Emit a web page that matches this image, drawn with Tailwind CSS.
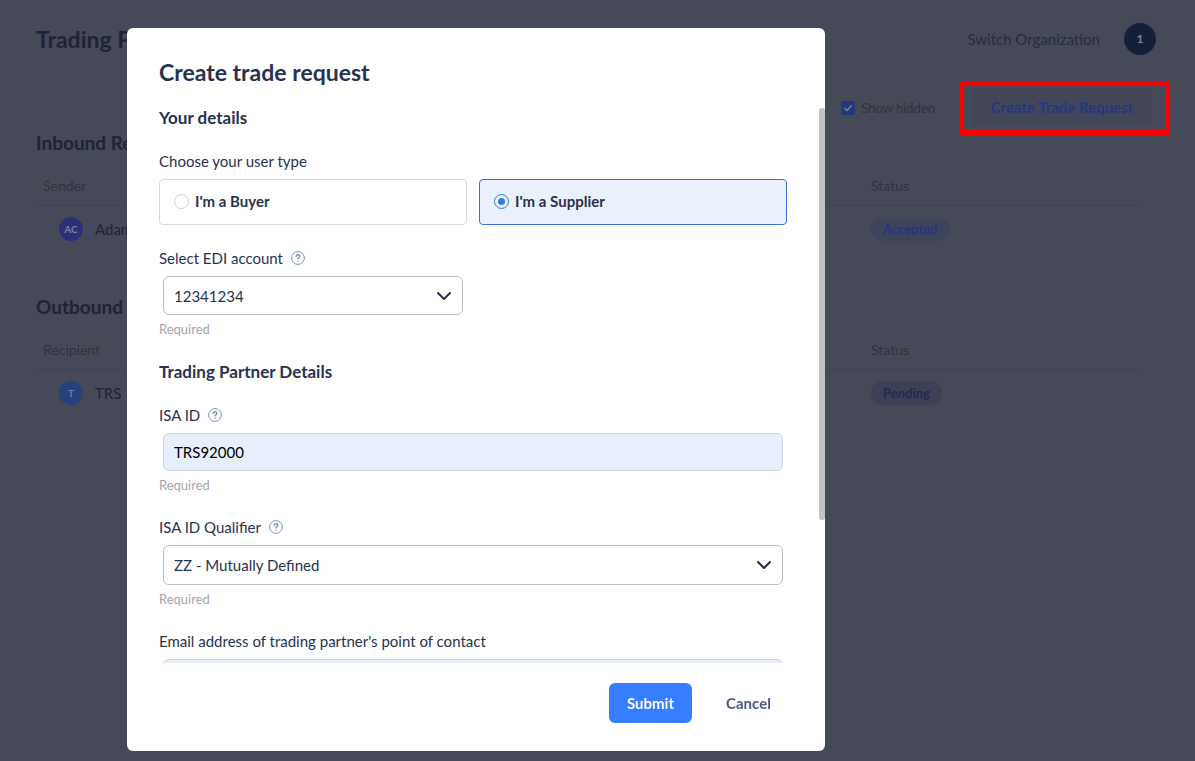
<!DOCTYPE html>
<html lang="en">
<head>
    <meta charset="UTF-8">
    <meta name="viewport" content="width=device-width, initial-scale=1.0">
    <title>Trading Partners</title>
    <script src="https://cdn.jsdelivr.net/npm/@tailwindcss/browser@4"></script>
</head>
<body class="h-screen overflow-hidden bg-[#464957] font-['Lato',sans-serif] text-[15px] leading-5 text-[#28324e]">

    <!-- Page behind the dialog -->
    <div class="pl-9 pr-[39px] pt-[19px] text-[#1f2338]">
        <header class="flex h-10 items-center justify-between">
            <h1 class="text-[23px] font-bold leading-8">Trading Partners</h1>
            <div class="flex items-center gap-6">
                <a href="#" class="text-[#262c45]">Switch Organization</a>
                <button class="size-8 rounded-full bg-[#161f3a] text-xs font-bold text-[#7f8391]">1</button>
            </div>
        </header>

        <div class="mt-[26px] -mr-[14px] flex h-[46px] items-center justify-end gap-6">
            <label class="flex items-center gap-[6px] text-[13px] text-[#2f3240]">
                <input type="checkbox" checked class="sr-only">
                <span class="flex size-[14px] items-center justify-center rounded-[3px] bg-[#22377c]">
                    <svg class="size-[10px]" viewBox="0 0 10 10" fill="none" stroke="#7d8193" stroke-width="1.4" stroke-linecap="round" stroke-linejoin="round"><path d="M1.7 5.2 4 7.4 8.4 2.8"/></svg>
                </span>
                Show hidden
            </label>
            <div class="border-5 border-[#ff0000] pt-[2px] pr-[13px] pb-1 pl-2">
                <button class="block h-[38px] w-[180px] rounded-md bg-[#434658] font-bold text-[#23377f]">Create Trade Request</button>
            </div>
        </div>

        <h2 class="text-[19px] font-bold leading-6">Inbound Requests</h2>
        <table class="mt-3 w-full max-w-[1106px] table-fixed text-left">
            <thead>
                <tr class="h-[38px] border-b border-[#404351] text-sm text-[#313441]">
                    <th class="w-[828px] pl-[7px] font-normal">Sender</th>
                    <th class="pl-[7px] font-normal">Status</th>
                </tr>
            </thead>
            <tbody>
                <tr class="h-12">
                    <td class="pl-[23px]">
                        <div class="flex items-center gap-3">
                            <span class="flex size-6 items-center justify-center rounded-full bg-[#2e2f7a] text-[10px] font-bold text-[#7d80a0]">AC</span>
                            Adam Co
                        </div>
                    </td>
                    <td class="pl-[7px]"><span class="inline-block rounded-full bg-[#3d445c] px-3 py-[2px] text-[13px] font-bold text-[#23377f]">Accepted</span></td>
                </tr>
            </tbody>
        </table>

        <h2 class="mt-[42px] text-[19px] font-bold leading-6">Outbound Requests</h2>
        <table class="mt-3 w-full max-w-[1106px] table-fixed text-left">
            <thead>
                <tr class="h-[38px] border-b border-[#404351] text-sm text-[#313441]">
                    <th class="w-[828px] pl-[7px] font-normal">Recipient</th>
                    <th class="pl-[7px] font-normal">Status</th>
                </tr>
            </thead>
            <tbody>
                <tr class="h-12">
                    <td class="pl-[23px]">
                        <div class="flex items-center gap-3">
                            <span class="flex size-6 items-center justify-center rounded-full bg-[#25427c] text-[10px] font-bold text-[#6b7da6]">T</span>
                            TRS
                        </div>
                    </td>
                    <td class="pl-[7px]"><span class="inline-block rounded-full bg-[#3e4156] px-3 py-[2px] text-[13px] font-bold text-[#23294f]">Pending</span></td>
                </tr>
            </tbody>
        </table>
    </div>

    <!-- Dialog -->
    <div class="fixed inset-x-0 top-7 bottom-[10px] flex justify-center pr-[243px]">
        <div role="dialog" aria-labelledby="dialog-title" class="relative flex w-[698px] flex-col rounded-md bg-white pt-7">
            <h2 id="dialog-title" class="px-8 text-[23px] font-bold leading-8">Create trade request</h2>

            <form id="trade-form" class="mt-5 min-h-0 flex-1 overflow-hidden px-8">
                <h3 class="text-[17px] font-bold leading-5">Your details</h3>

                <fieldset class="mt-[23px]">
                    <legend class="pb-2">Choose your user type</legend>
                    <div class="grid w-[628px] grid-cols-2 gap-3 font-bold">
                        <label class="flex h-[46px] items-center gap-[6px] rounded border border-[#d9d9d9] px-[14px] pb-[2px]">
                            <input type="radio" name="type" class="size-[15px] appearance-none rounded-full border border-[#d0d0d0]">
                            I'm a Buyer
                        </label>
                        <label class="flex h-[46px] items-center gap-[6px] rounded border border-[#3f6fd8] bg-[#eaf1fd] px-[14px] pb-[2px]">
                            <input type="radio" name="type" checked class="size-[15px] appearance-none rounded-full border border-[#2f7de1] bg-[#2f7de1] bg-clip-content p-[3px]">
                            I'm a Supplier
                        </label>
                    </div>
                </fieldset>

                <div class="mt-[23px] flex items-center gap-2">
                    <label for="account">Select EDI account</label>
                    <svg class="size-[14px]" viewBox="0 0 14 14" fill="none" stroke="#7d92bd" stroke-linecap="round"><circle cx="7" cy="7" r="6.4"/><path stroke-width="1.4" d="M5.200 5.400c.1-1.100.9-1.700 1.800-1.700s1.800.6 1.800 1.600c0 1.300-1.800 1.300-1.800 2.600M7 10.200v.1"/></svg>
                </div>
                <div class="relative mx-1 mt-2 w-[300px]">
                    <select id="account" class="block h-[39px] w-full appearance-none rounded-md border border-[#bdbdbd] bg-white px-[10px]">
                        <option>12341234</option>
                    </select>
                    <svg class="pointer-events-none absolute right-[11px] top-3 size-4" viewBox="0 0 16 16" fill="none" stroke="#252f4a" stroke-width="2" stroke-linecap="round" stroke-linejoin="round"><path d="M2 5l6 6 6-6"/></svg>
                </div>
                <p class="mt-1 text-[13px] text-[#a6a6a6]">Required</p>

                <h3 class="mt-[23px] text-[17px] font-bold leading-5">Trading Partner Details</h3>

                <div class="mt-[23px] flex items-center gap-2">
                    <label for="isa">ISA ID</label>
                    <svg class="size-[14px]" viewBox="0 0 14 14" fill="none" stroke="#7d92bd" stroke-linecap="round"><circle cx="7" cy="7" r="6.4"/><path stroke-width="1.4" d="M5.200 5.400c.1-1.100.9-1.700 1.800-1.700s1.800.6 1.800 1.600c0 1.300-1.800 1.300-1.800 2.600M7 10.200v.1"/></svg>
                </div>
                <input id="isa" type="text" value="TRS92000" class="mx-1 mt-2 block h-[38px] w-[620px] rounded-md border border-[#ccd5e2] bg-[#e8effc] px-[10px] text-black">
                <p class="mt-1 text-[13px] text-[#a6a6a6]">Required</p>

                <div class="mt-[22px] flex items-center gap-2">
                    <label for="qualifier">ISA ID Qualifier</label>
                    <svg class="size-[14px]" viewBox="0 0 14 14" fill="none" stroke="#7d92bd" stroke-linecap="round"><circle cx="7" cy="7" r="6.4"/><path stroke-width="1.4" d="M5.200 5.400c.1-1.100.9-1.700 1.800-1.700s1.800.6 1.800 1.600c0 1.300-1.800 1.300-1.800 2.600M7 10.200v.1"/></svg>
                </div>
                <div class="relative mx-1 mt-2 w-[620px]">
                    <select id="qualifier" class="block h-10 w-full appearance-none rounded-md border border-[#bdbdbd] bg-white px-[10px]">
                        <option>ZZ - Mutually Defined</option>
                    </select>
                    <svg class="pointer-events-none absolute right-[11px] top-3 size-4" viewBox="0 0 16 16" fill="none" stroke="#252f4a" stroke-width="2" stroke-linecap="round" stroke-linejoin="round"><path d="M2 5l6 6 6-6"/></svg>
                </div>
                <p class="mt-1 text-[13px] text-[#a6a6a6]">Required</p>

                <label for="email" class="mt-[22px] block">Email address of trading partner's point of contact</label>
                <input id="email" type="email" class="mx-1 mt-2 block h-[38px] w-[620px] rounded-md border border-[#ccd5e2] bg-[#e8effc] px-[10px]">
            </form>

            <div class="absolute right-0 top-20 h-[412px] w-[6px] rounded-full bg-[#c1c1c1]"></div>

            <div class="flex justify-end gap-4 px-9 pb-7 pt-5 font-bold">
                <button form="trade-form" class="h-10 w-[83px] rounded-md bg-[#377dff] text-white">Submit</button>
                <button type="button" class="h-10 w-[81px] text-[#4d5b82]">Cancel</button>
            </div>
        </div>
    </div>
</body>
</html>
